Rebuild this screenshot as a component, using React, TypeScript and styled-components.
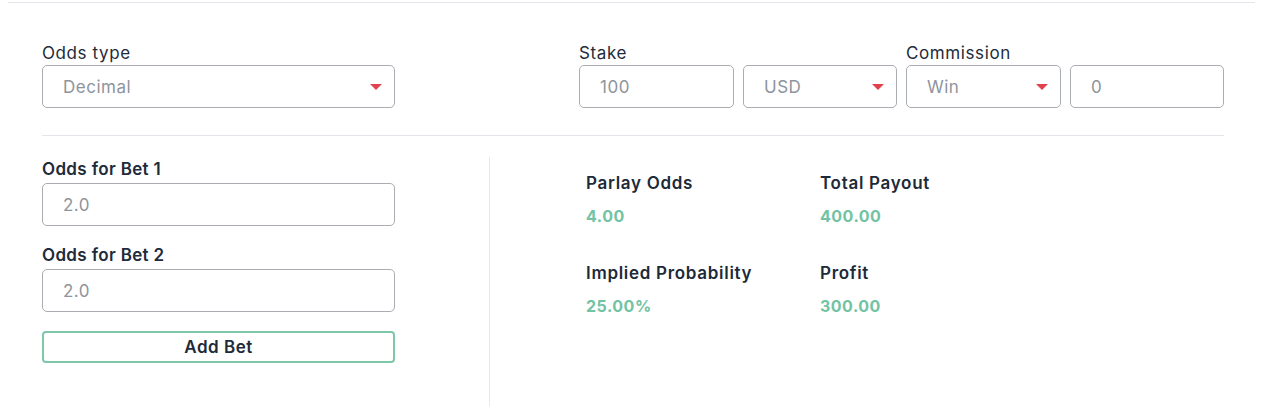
import React from "react";
import styled, { createGlobalStyle } from "styled-components";

const Global = createGlobalStyle`
  html, body { margin: 0; padding: 0; background: #ffffff; }
  body { padding: 2px 7px 0 8px; font-family: "Inter", "Open Sans", sans-serif; color: #1e2b3a; }
  * { box-sizing: border-box; }
`;

const Panel = styled.div`
  border-top: 1px solid #e3e6ea;
  padding: 0 31px 0 34px;
`;

const TopRow = styled.div`
  display: flex;
  justify-content: space-between;
  padding-top: 38px;
  padding-bottom: 27px;
  border-bottom: 1px solid #e3e6ea;
`;

const Field = styled.div<{ $w: number }>`
  width: ${(p) => p.$w}px;
  display: flex;
  flex-direction: column;
`;

const FieldGroup = styled.div`
  display: flex;
  gap: 9px;
`;

const Label = styled.label<{ $bold?: boolean }>`
  font-size: 17px;
  line-height: 24px;
  letter-spacing: ${(p) => (p.$bold ? "0.35px" : "0.6px")};
  font-weight: ${(p) => (p.$bold ? 600 : 400)};
  color: #1e2b3a;
  height: 24px;
  white-space: nowrap;
`;

const Box = styled.div<{ $w?: number }>`
  width: ${(p) => (p.$w ? `${p.$w}px` : "100%")};
  height: 43px;
  border: 1px solid #a9adb2;
  border-radius: 5px;
  display: flex;
  align-items: center;
  justify-content: space-between;
  padding: 0 12px 0 20px;
  font-size: 17px;
  letter-spacing: 0.5px;
  color: #8e949b;
`;

const Caret = styled.span`
  width: 0;
  height: 0;
  border-left: 6px solid transparent;
  border-right: 6px solid transparent;
  border-top: 6px solid #e0434f;
`;

const Bottom = styled.div`
  display: flex;
  padding-top: 21px;
  min-height: 270px;
`;

const LeftCol = styled.div`
  width: 448px;
  padding-right: 94px;
  border-right: 1px solid #e6e8ec;
  display: flex;
  flex-direction: column;
`;

const BetField = styled.div`
  display: flex;
  flex-direction: column;
  gap: 2px;
  margin-bottom: 17px;
`;

const AddBet = styled.button`
  margin-top: 2px;
  height: 32px;
  width: 100%;
  background: #fff;
  border: 2px solid #7ec7a9;
  border-radius: 4px;
  font-family: inherit;
  font-size: 17px;
  letter-spacing: 0.5px;
  font-weight: 600;
  color: #1e2b3a;
  cursor: pointer;
`;

const Results = styled.div`
  padding-left: 96px;
  padding-top: 14px;
  display: grid;
  grid-template-columns: 234px 234px;
  row-gap: 33px;
  align-content: start;
`;

const Stat = styled.div`
  display: flex;
  flex-direction: column;
  gap: 9px;
`;

const StatTitle = styled.div`
  font-size: 17px;
  line-height: 24px;
  letter-spacing: 0.7px;
  font-weight: 600;
  color: #1c2a39;
  white-space: nowrap;
`;

const StatValue = styled.div`
  font-size: 16px;
  line-height: 24px;
  letter-spacing: 0.5px;
  font-weight: 700;
  color: #72c3a3;
`;

const stats = [
  { t: "Parlay Odds", v: "4.00" },
  { t: "Total Payout", v: "400.00" },
  { t: "Implied Probability", v: "25.00%" },
  { t: "Profit", v: "300.00" },
];

export default function App() {
  return (
    <>
      <Global />
      <Panel>
        <TopRow>
          <Field $w={353}>
            <Label>Odds type</Label>
            <Box>
              <span>Decimal</span>
              <Caret />
            </Box>
          </Field>
          <FieldGroup>
            <Field $w={318}>
              <Label>Stake</Label>
              <FieldGroup>
                <Box $w={155}>100</Box>
                <Box $w={154}>
                  <span>USD</span>
                  <Caret />
                </Box>
              </FieldGroup>
            </Field>
            <Field $w={318}>
              <Label>Commission</Label>
              <FieldGroup>
                <Box $w={155}>
                  <span>Win</span>
                  <Caret />
                </Box>
                <Box $w={154}>0</Box>
              </FieldGroup>
            </Field>
          </FieldGroup>
        </TopRow>
        <Bottom>
          <LeftCol>
            <BetField>
              <Label $bold>Odds for Bet 1</Label>
              <Box>2.0</Box>
            </BetField>
            <BetField>
              <Label $bold>Odds for Bet 2</Label>
              <Box>2.0</Box>
            </BetField>
            <AddBet>Add Bet</AddBet>
          </LeftCol>
          <Results>
            {stats.map((s) => (
              <Stat key={s.t}>
                <StatTitle>{s.t}</StatTitle>
                <StatValue>{s.v}</StatValue>
              </Stat>
            ))}
          </Results>
        </Bottom>
      </Panel>
    </>
  );
}
